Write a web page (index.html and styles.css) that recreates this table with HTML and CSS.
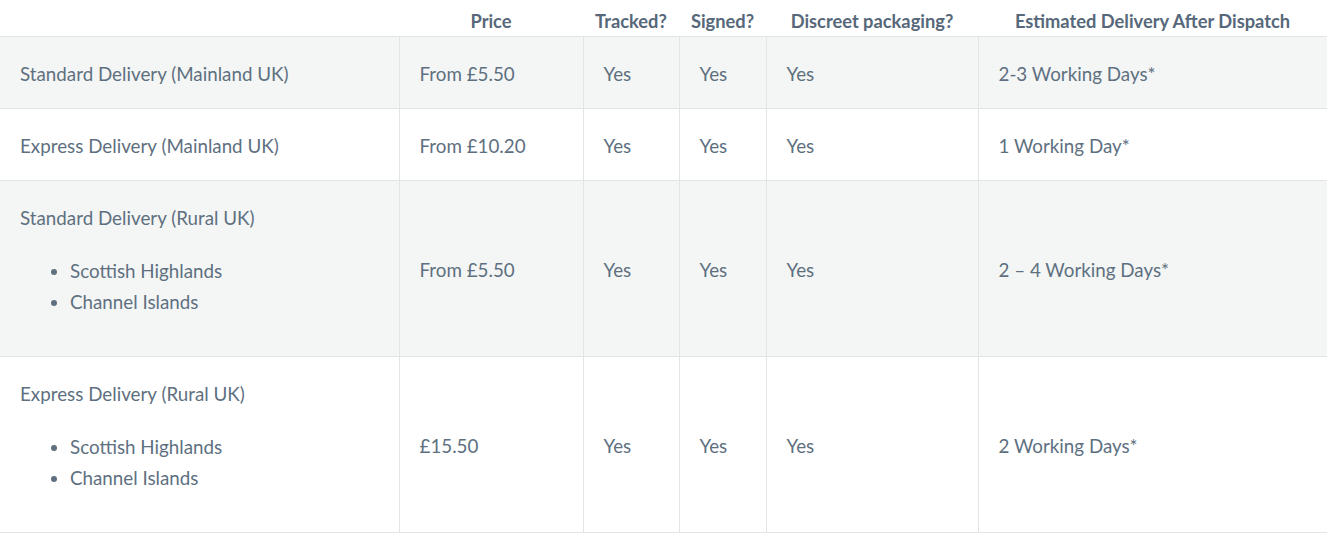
FILE: index.html
```html
<!DOCTYPE html>
<html>
<head>
<meta charset="utf-8">
<link rel="stylesheet" href="styles.css">
</head>
<body>
<table class="delivery">
  <colgroup>
    <col class="c1"><col class="c2"><col class="c3"><col class="c4"><col class="c5"><col class="c6">
  </colgroup>
  <thead>
    <tr>
      <th></th>
      <th>Price</th>
      <th>Tracked?</th>
      <th>Signed?</th>
      <th>Discreet packaging?</th>
      <th>Estimated Delivery After Dispatch</th>
    </tr>
  </thead>
  <tbody>
    <tr class="odd">
      <td>Standard Delivery (Mainland UK)</td>
      <td>From £5.50</td>
      <td>Yes</td>
      <td>Yes</td>
      <td>Yes</td>
      <td>2-3 Working Days*</td>
    </tr>
    <tr>
      <td>Express Delivery (Mainland UK)</td>
      <td>From £10.20</td>
      <td>Yes</td>
      <td>Yes</td>
      <td>Yes</td>
      <td>1 Working Day*</td>
    </tr>
    <tr class="odd">
      <td>
        <p class="lead">Standard Delivery (Rural UK)</p>
        <ul class="areas">
          <li>Scottish Highlands</li>
          <li>Channel Islands</li>
        </ul>
      </td>
      <td>From £5.50</td>
      <td>Yes</td>
      <td>Yes</td>
      <td>Yes</td>
      <td>2 – 4 Working Days*</td>
    </tr>
    <tr>
      <td>
        <p class="lead">Express Delivery (Rural UK)</p>
        <ul class="areas">
          <li>Scottish Highlands</li>
          <li>Channel Islands</li>
        </ul>
      </td>
      <td>£15.50</td>
      <td>Yes</td>
      <td>Yes</td>
      <td>Yes</td>
      <td>2 Working Days*</td>
    </tr>
  </tbody>
</table>
</body>
</html>
```
FILE: styles.css
```css
html, body {
  margin: 0;
  padding: 0;
  background: #ffffff;
}
body {
  font-family: Lato, "Noto Sans", sans-serif;
  font-size: 18.8px;
  color: #5e707f;
}
.delivery {
  width: 1327px;
  table-layout: fixed;
  border-collapse: collapse;
}
.c1 { width: 399px; }
.c2 { width: 184px; }
.c3 { width: 96px; }
.c4 { width: 87px; }
.c5 { width: 212px; }
.c6 { width: 349px; }
.delivery th {
  font-size: 18.3px;
  font-weight: 700;
  color: #56687a;
  text-align: center;
  padding: 8px 4px 2px;
  line-height: 26px;
  border-bottom: 1px solid #e1e5e8;
  white-space: nowrap;
}
.delivery td {
  padding: 21px 20px 19px;
  line-height: 31px;
  text-align: left;
  vertical-align: middle;
  border-bottom: 1px solid #e1e5e8;
}
.delivery td + td {
  border-left: 1px solid #e1e5e8;
}
.delivery tr.odd td {
  background: #f4f6f6;
}
.lead {
  margin: 0 0 22px;
}
.areas {
  margin: 0 0 20px;
  padding-left: 50px;
}
```
